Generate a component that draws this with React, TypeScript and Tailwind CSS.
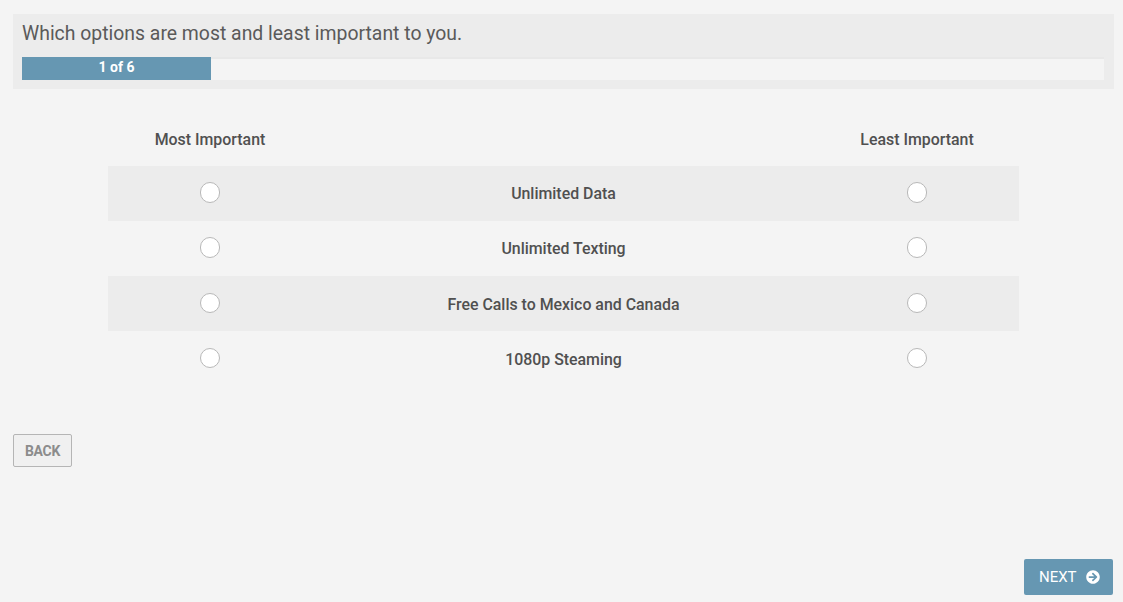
import { FaArrowCircleRight } from "react-icons/fa";

const OPTIONS = [
  "Unlimited Data",
  "Unlimited Texting",
  "Free Calls to Mexico and Canada",
  "1080p Steaming",
];

function Radio() {
  return <span className="block w-[20px] h-[20.6px] rounded-full bg-white border border-[#b8b8b8]" />;
}

export default function App() {
  return (
    <div className="h-[602px] overflow-hidden bg-[#f4f4f4] text-[#505050] flex flex-col pt-[14px] pl-[13px] pr-[10px] pb-[7px] font-['Roboto',sans-serif]">
      {/* Question header + progress */}
      <div className="h-[75px] bg-[#ececec] pl-[9px] pr-[10px] mr-[-1px]">
        <h1 className="h-[43px] pt-[8px] text-[19.4px] leading-[24px] font-normal text-[#5a5a5a]">
          Which options are most and least important to you.
        </h1>
        <div className="h-[23px] bg-[#f4f4f4] border-t-2 border-[#e8e8e8] relative">
          <div className="absolute left-0 top-[-2px] w-[189px] h-[23px] bg-[#6697b2] text-white text-[14px] leading-[21px] font-bold text-center">
            1 of 6
          </div>
        </div>
      </div>

      {/* Ranking table */}
      <div className="w-[911px] ml-[95px] mt-[27px]">
        <div className="grid grid-cols-[204px_503px_204px] h-[50px] items-center text-[15.9px] font-medium pb-[3px]">
          <div className="text-center">Most Important</div>
          <div />
          <div className="text-center">Least Important</div>
        </div>
        {OPTIONS.map((option, i) => (
          <div
            key={option}
            className={
              i % 2 === 0
                ? "grid grid-cols-[204px_503px_204px] h-[55.15px] items-center bg-[#ececec]"
                : "grid grid-cols-[204px_503px_204px] h-[55.15px] items-center"
            }
          >
            <div className="flex justify-center pb-[2px]"><Radio /></div>
            <div className="text-center text-[15.9px] leading-[24px] font-medium pt-[1.4px]">{option}</div>
            <div className="flex justify-center pb-[2px]"><Radio /></div>
          </div>
        ))}
      </div>

      <button className="self-start mt-[47.4px] w-[59px] h-[33px] rounded-[2px] border border-[#b5b5b5] bg-[#f0f0f0] text-[#8c8c8c] text-[14px] tracking-[-0.3px] font-bold pt-[3px]">
        BACK
      </button>

      <button className="self-end mt-auto w-[89px] h-[36px] rounded-[2px] bg-[#6697b2] text-white text-[15px] flex items-center justify-center gap-[9.5px] pl-[2px]">
        NEXT
        <FaArrowCircleRight className="w-[14px] h-[14px]" />
      </button>
    </div>
  );
}
